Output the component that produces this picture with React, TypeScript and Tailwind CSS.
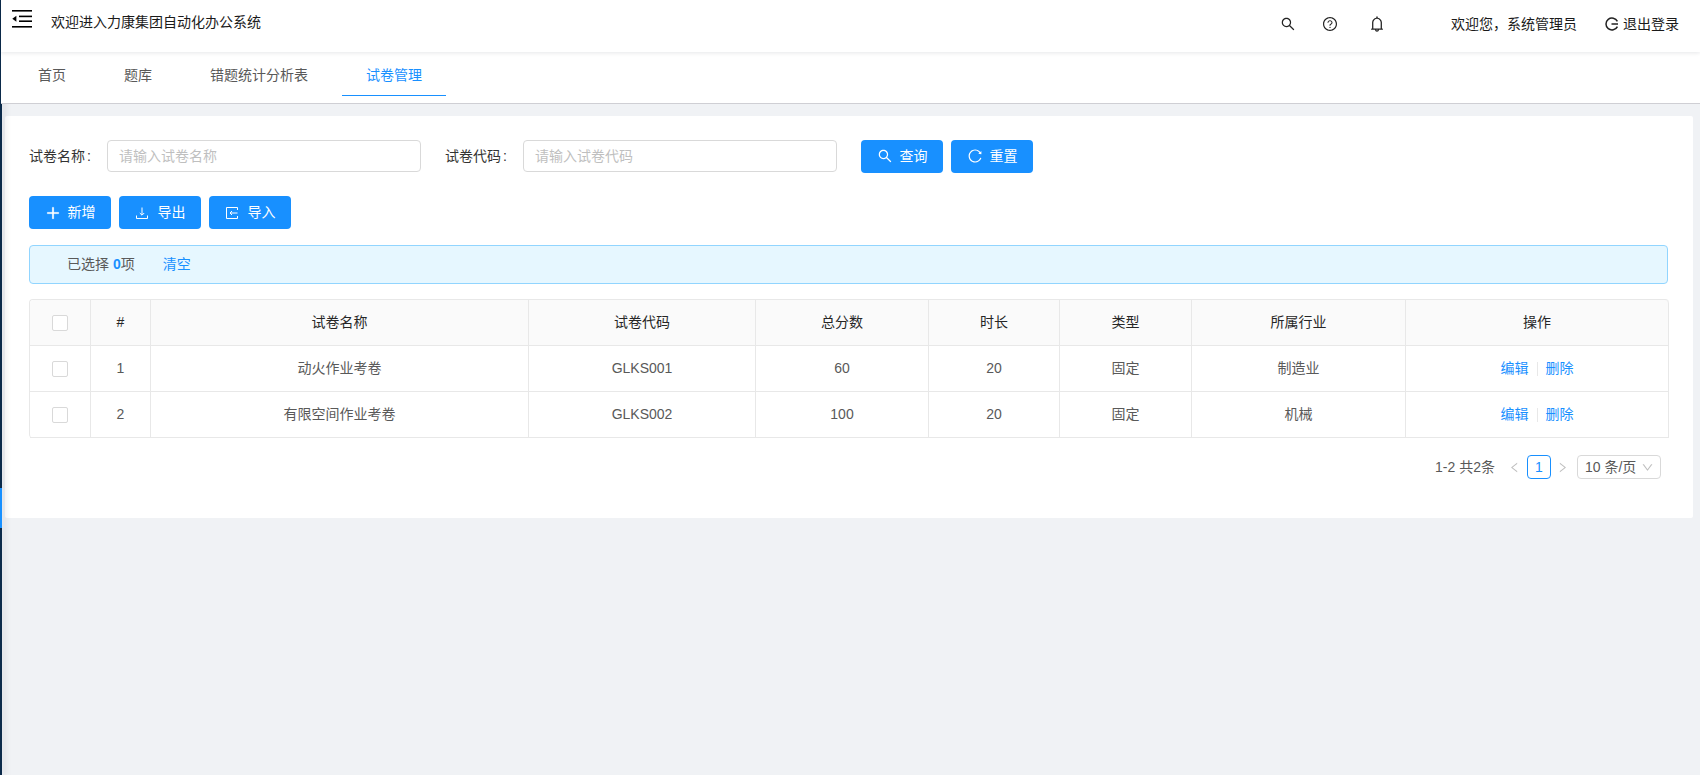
import React from "react";
import {
  AiOutlineSearch,
  AiOutlineQuestionCircle,
  AiOutlineBell,
  AiOutlinePlus,
  AiOutlineReload,
  AiOutlineDown,
  AiOutlineLeft,
  AiOutlineRight,
} from "react-icons/ai";

function MenuIcon() {
  return (
    <svg viewBox="0 0 20 18" className="ml-[11px] mt-[10px] h-[18px] w-[20px] shrink-0 self-start" fill="#000">
      <rect x="0" y="0" width="20" height="1.6" />
      <rect x="7" y="5.6" width="13" height="1.6" />
      <rect x="7" y="10.4" width="13" height="1.6" />
      <rect x="0" y="16" width="20" height="1.6" />
      <path d="M0.3 8.8L4.4 5.8V11.8Z" />
    </svg>
  );
}

function LogoutIcon() {
  return (
    <svg viewBox="0 0 14 14" className="h-[14px] w-[14px]" fill="none" stroke="#222" strokeWidth="1.5">
      <path d="M12.4 4.4A6 6 0 1 0 12.4 9.6" />
      <path d="M6.5 7H13" />
    </svg>
  );
}

function ExportIcon() {
  return (
    <svg viewBox="0 0 14 14" className="h-[14px] w-[14px] -translate-x-[1px]" fill="none" stroke="#fff" strokeWidth="1">
      <path d="M7 1.5V9M4.8 7L7 9.2 9.2 7" />
      <path d="M1.5 9.5V12.5H12.5V9.5" />
    </svg>
  );
}

function ImportIcon() {
  return (
    <svg viewBox="0 0 14 14" className="h-[14px] w-[14px] -translate-x-[1px]" fill="none" stroke="#fff" strokeWidth="1">
      <path d="M12.5 4V1.5H1.5V12.5H12.5V10" />
      <path d="M12.5 7H5M7 5L5 7 7 9" />
    </svg>
  );
}

function Btn({ icon, children }: { icon: React.ReactNode; children: React.ReactNode }) {
  return (
    <button className="flex h-[33px] w-[82px] items-center justify-center gap-[7px] rounded-[4px] bg-[#1890ff] text-[14px] text-white">
      <span className="flex h-[16px] w-[16px] items-center justify-center">{icon}</span>
      <span>{children}</span>
    </button>
  );
}

function Check() {
  return <span className="mx-auto block h-[16px] w-[16px] rounded-[2px] border border-[#d9d9d9] bg-white" />;
}

const headers = ["试卷名称", "试卷代码", "总分数", "时长", "类型", "所属行业"];
const rows = [
  { n: 1, name: "动火作业考卷", code: "GLKS001", score: "60", time: "20", type: "固定", ind: "制造业" },
  { n: 2, name: "有限空间作业考卷", code: "GLKS002", score: "100", time: "20", type: "固定", ind: "机械" },
];
const th = "h-[46px] border-r border-b border-[#e8e8e8] text-center font-normal text-[14px] text-[#262626] bg-[#fafafa] p-0";
const td = "h-[46px] border-r border-b border-[#e8e8e8] text-center text-[14px] text-[#595959] p-0";

export default function App() {
  return (
    <div className="flex h-screen w-full overflow-hidden bg-[#f0f2f5] font-['Liberation_Sans','Noto_Sans_CJK_SC',sans-serif] text-[14px]">
      <aside className="relative z-10 flex w-[1px] shrink-0 flex-col shadow-[3px_0_6px_rgba(0,21,41,0.4)]">
        <div className="h-[488px] w-[2px] shrink-0 bg-[#0b2a4a]" />
        <div className="h-[40px] w-[2px] shrink-0 bg-[#1890ff]" />
        <div className="w-[2px] flex-1 bg-[#0b2a4a]" />
      </aside>
      <main className="flex min-w-0 flex-1 flex-col">
        <div className="relative z-20 bg-white">
          <header className="flex h-[52px] items-center bg-white pr-[21px] shadow-[0_1px_4px_rgba(0,21,41,0.10)]">
            <MenuIcon />
            <span className="mb-[8px] ml-[19px] text-[#1a1a1a]">欢迎进入力康集团自动化办公系统</span>
            <div className="mb-[4px] ml-auto flex items-center">
              <AiOutlineSearch className="h-[16px] w-[16px] text-[#222]" />
              <AiOutlineQuestionCircle className="ml-[26px] h-[16px] w-[16px] text-[#222]" />
              <AiOutlineBell className="ml-[30px] h-[18px] w-[18px] text-[#222]" />
              <span className="ml-[65px] text-[#1a1a1a]">欢迎您，系统管理员</span>
              <span className="ml-[28px] mr-[4px]"><LogoutIcon /></span>
              <span className="text-[#1a1a1a]">退出登录</span>
            </div>
          </header>
          <nav className="flex h-[52px] items-stretch border-b border-[#cfcfd4] pl-[23px] text-[#595959]">
            <span className="flex w-[56px] items-center justify-center pb-[5px]">首页</span>
            <span className="ml-[30px] flex w-[56px] items-center justify-center pb-[5px]">题库</span>
            <span className="ml-[30px] flex w-[126px] items-center justify-center pb-[5px]">错题统计分析表</span>
            <span className="mb-[7px] ml-[20px] flex w-[104px] items-center justify-center border-b-[1.5px] border-[#1890ff] pt-[4px] text-[#1890ff]">试卷管理</span>
          </nav>
        </div>
        <section className="flex-1 pl-[4px] pr-[7px] pt-[12px]">
          <div className="h-[402px] rounded-[2px] bg-white pl-[24px] pr-[25px] pt-[24px]">
            <div className="flex h-[32px] items-center">
              <span className="w-[78px] text-[#333]">试卷名称<span className="ml-[2px]">:</span></span>
              <span className="flex h-[32px] w-[314px] items-center rounded-[4px] border border-[#d9d9d9] px-[11px] text-[#bfbfbf]">请输入试卷名称</span>
              <span className="ml-[24px] w-[78px] text-[#333]">试卷代码<span className="ml-[2px]">:</span></span>
              <span className="flex h-[32px] w-[314px] items-center rounded-[4px] border border-[#d9d9d9] px-[11px] text-[#bfbfbf]">请输入试卷代码</span>
              <div className="ml-[24px] flex gap-[8px]">
                <Btn icon={<AiOutlineSearch className="h-[16px] w-[16px]" />}>查询</Btn>
                <Btn icon={<AiOutlineReload className="h-[16px] w-[16px]" />}>重置</Btn>
              </div>
            </div>
            <div className="mt-[24px] flex gap-[8px]">
              <Btn icon={<AiOutlinePlus className="h-[16px] w-[16px]" stroke="currentColor" strokeWidth={40} />}>新增</Btn>
              <Btn icon={<ExportIcon />}>导出</Btn>
              <Btn icon={<ImportIcon />}>导入</Btn>
            </div>
            <div className="mt-[16px] flex h-[39px] items-center rounded-[4px] border border-[#91d5ff] bg-[#e6f7ff] pl-[37px] text-[#595959]">
              <span>已选择 <b className="font-bold text-[#1890ff]">0</b>项</span>
              <span className="ml-[28px] text-[#1890ff]">清空</span>
            </div>
            <table className="mt-[15px] w-[1640px] table-fixed border-separate border-spacing-0 rounded-[4px] border-l border-t border-[#e8e8e8]">
              <colgroup>
                <col className="w-[61px]" />
                <col className="w-[60px]" />
                <col className="w-[378px]" />
                <col className="w-[227px]" />
                <col className="w-[173px]" />
                <col className="w-[131px]" />
                <col className="w-[132px]" />
                <col className="w-[214px]" />
                <col />
              </colgroup>
              <thead>
                <tr>
                  <th className={th + " rounded-tl-[4px]"}><Check /></th>
                  <th className={th}>#</th>
                  {headers.map((h) => (
                    <th key={h} className={th}>{h}</th>
                  ))}
                  <th className={th + " rounded-tr-[4px]"}>操作</th>
                </tr>
              </thead>
              <tbody>
                {rows.map((r) => (
                  <tr key={r.n}>
                    <td className={td}><Check /></td>
                    <td className={td}>{r.n}</td>
                    <td className={td}>{r.name}</td>
                    <td className={td}>{r.code}</td>
                    <td className={td}>{r.score}</td>
                    <td className={td}>{r.time}</td>
                    <td className={td}>{r.type}</td>
                    <td className={td}>{r.ind}</td>
                    <td className={td}>
                      <span className="inline-flex items-center text-[#1890ff]">
                        编辑
                        <span className="mx-[8px] h-[14px] w-px bg-[#e8e8e8]" />
                        删除
                      </span>
                    </td>
                  </tr>
                ))}
              </tbody>
            </table>
            <div className="mt-[17px] flex h-[24px] items-center justify-end pr-[7px] text-[#595959]">
              <span>1-2 共2条</span>
              <AiOutlineLeft className="ml-[13px] h-[13px] w-[13px] text-[#bfbfbf]" />
              <span className="ml-[6px] flex h-[24px] w-[24px] items-center justify-center rounded-[4px] border border-[#1890ff] text-[#1890ff]">1</span>
              <AiOutlineRight className="ml-[5px] h-[13px] w-[13px] text-[#bfbfbf]" />
              <span className="ml-[8px] flex h-[24px] w-[84px] items-center justify-between rounded-[4px] border border-[#d9d9d9] pl-[7px] pr-[6px]">
                10 条/页
                <AiOutlineDown className="h-[13px] w-[13px] text-[#bfbfbf]" />
              </span>
            </div>
          </div>
        </section>
      </main>
    </div>
  );
}
